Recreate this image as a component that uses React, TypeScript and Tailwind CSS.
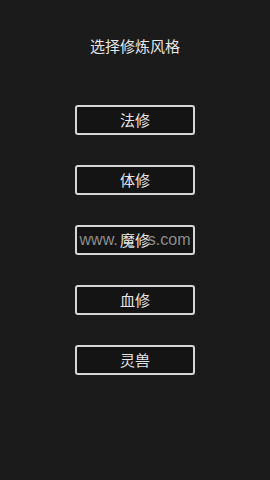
import React from "react";

const items = ["法修", "体修", "魔修", "血修", "灵兽"];

export default function App() {
  return (
    <div
      className="w-[270px] h-[480px] bg-[#1b1b1b] flex flex-col items-center"
      style={{ fontFamily: '"Noto Sans CJK SC", "Noto Sans", sans-serif' }}
    >
      <div className="mt-[36px] h-[20px] text-[15px] leading-[20px] text-[#e6e6e6]">
        选择修炼风格
      </div>
      <div className="mt-[49px] flex flex-col gap-[30px]">
        {items.map((t, i) => (
          <div
            key={t}
            className="relative w-[120px] h-[30px] border-2 border-[#d6d6d6] rounded-[3px] bg-[#141414] flex items-center justify-center text-[15px] leading-[20px] text-[#e6e6e6]"
          >
            {t}
            {i === 2 && (
              <div
                className="absolute inset-0 flex items-center justify-center text-[16px] text-[#8c8c8c] pointer-events-none"
                style={{ fontFamily: '"Liberation Sans", sans-serif' }}
              >
                <span>www.</span>
                <span className="w-[30px]" />
                <span>s.com</span>
              </div>
            )}
          </div>
        ))}
      </div>
    </div>
  );
}
